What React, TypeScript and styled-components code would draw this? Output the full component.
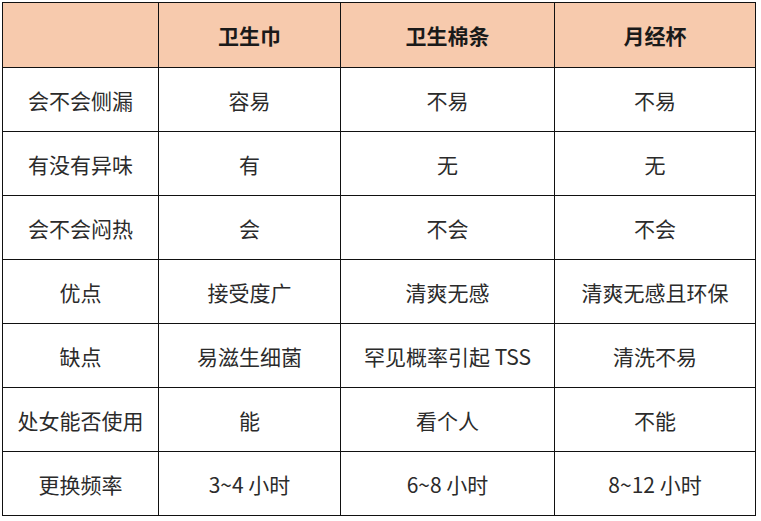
import React from "react";
import styled, { createGlobalStyle } from "styled-components";

const GlobalStyle = createGlobalStyle`
  html, body {
    margin: 0;
    padding: 0;
    background: #ffffff;
  }
  body {
    font-family: "Noto Sans CJK SC", "Noto Sans", sans-serif;
  }
`;

const headers = ["", "卫生巾", "卫生棉条", "月经杯"];

const rows: string[][] = [
  ["会不会侧漏", "容易", "不易", "不易"],
  ["有没有异味", "有", "无", "无"],
  ["会不会闷热", "会", "不会", "不会"],
  ["优点", "接受度广", "清爽无感", "清爽无感且环保"],
  ["缺点", "易滋生细菌", "罕见概率引起 TSS", "清洗不易"],
  ["处女能否使用", "能", "看个人", "不能"],
  ["更换频率", "3~4 小时", "6~8 小时", "8~12 小时"],
];

const Page = styled.div`
  padding: 2px 0 0 2px;
`;

const Table = styled.div`
  display: grid;
  grid-template-columns: 156px 182px 214px 201px;
  grid-template-rows: 65px repeat(7, 64px);
  width: max-content;
  border-left: 1px solid #111;
  border-top: 1px solid #111;
`;

const Cell = styled.div<{ $head?: boolean }>`
  display: flex;
  align-items: center;
  justify-content: center;
  border-right: 1px solid #111;
  border-bottom: 1px solid #111;
  background: ${(p) => (p.$head ? "#f7caad" : "#ffffff")};
  color: ${(p) => (p.$head ? "#1a1a1a" : "#2b2b2b")};
  font-size: 21px;
  font-weight: ${(p) => (p.$head ? 700 : 400)};
  white-space: nowrap;
`;

const App = () => {
  return (
    <>
      <GlobalStyle />
      <Page>
        <Table>
          {headers.map((h, i) => (
            <Cell key={`h${i}`} $head>
              {h}
            </Cell>
          ))}
          {rows.map((row, r) =>
            row.map((text, c) => <Cell key={`${r}-${c}`}>{text}</Cell>)
          )}
        </Table>
      </Page>
    </>
  );
};

export default App;
